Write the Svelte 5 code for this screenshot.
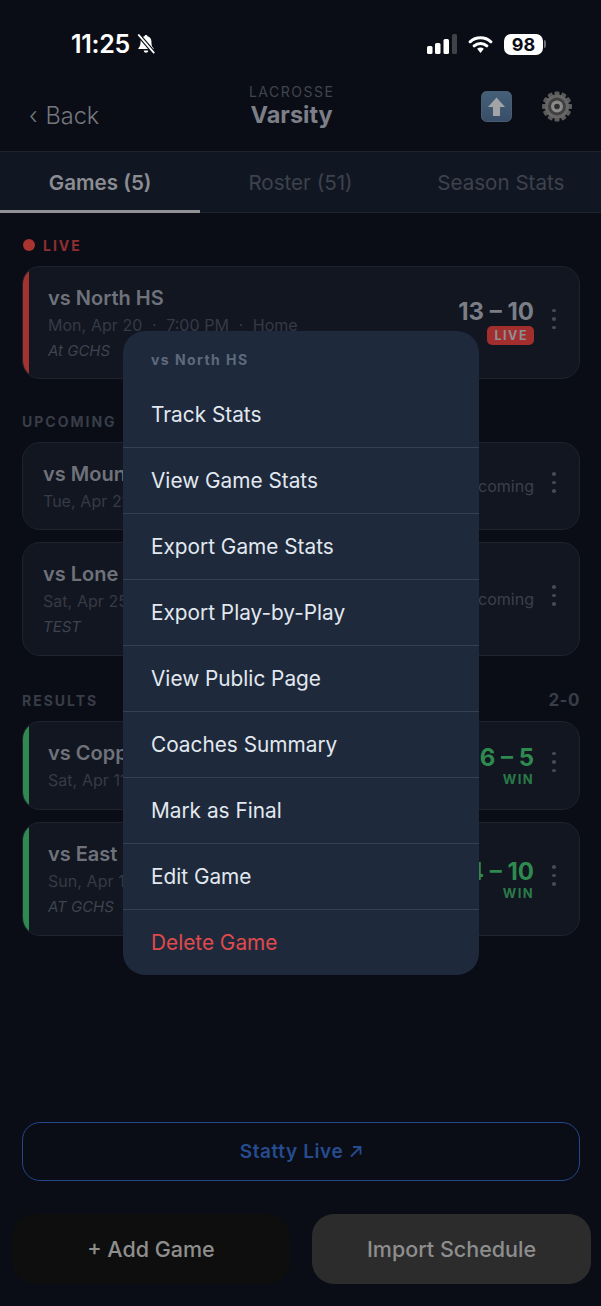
<script>
  const upcoming = [
    { name: 'vs Mountain View', sub: 'Tue, Apr 21  ·  6:30 PM  ·  Away', note: '' },
    { name: 'vs Lone Peak', sub: 'Sat, Apr 25  ·  1:00 PM  ·  Home', note: 'TEST' }
  ];
  const results = [
    { name: 'vs Copper Hills', sub: 'Sat, Apr 11  ·  4:00 PM  ·  Away', note: '', score: '6 – 5' },
    { name: 'vs East High', sub: 'Sun, Apr 12  ·  5:00 PM  ·  Home', note: 'AT GCHS', score: '14 – 10' }
  ];
  const menuItems = [
    'Track Stats',
    'View Game Stats',
    'Export Game Stats',
    'Export Play-by-Play',
    'View Public Page',
    'Coaches Summary',
    'Mark as Final',
    'Edit Game'
  ];
  const teeth = [0, 30, 60, 90, 120, 150];
</script>

<style>
  :global(body) {
    margin: 0;
    background: #0a0d16;
  }

  .screen {
    position: relative;
    width: 601px;
    height: 1306px;
    overflow: hidden;
    display: flex;
    flex-direction: column;
    background: #0a0d16;
    font-family: Inter, "Liberation Sans", sans-serif;
  }

  /* status bar */
  .status {
    height: 76px;
    flex: none;
    display: flex;
    align-items: flex-start;
    justify-content: space-between;
    padding: 30px 55px 0 71px;
    box-sizing: border-box;
    color: #fff;
  }
  .status-left {
    display: flex;
    align-items: center;
    gap: 6px;
    height: 28px;
    font-size: 25px;
    font-weight: 600;
    letter-spacing: -0.3px;
  }
  .status-right {
    display: flex;
    align-items: center;
    gap: 11px;
    height: 28px;
  }
  .battery {
    display: flex;
    align-items: center;
    gap: 1px;
  }
  .battery-body {
    width: 39px;
    height: 21px;
    border-radius: 7px;
    background: #fff;
    color: #0a0d16;
    font-size: 18px;
    font-weight: 700;
    display: flex;
    align-items: center;
    justify-content: center;
  }
  .battery-tip {
    width: 2px;
    height: 8px;
    border-radius: 0 2px 2px 0;
    background: #6b6e74;
  }

  /* header */
  .header {
    height: 76px;
    flex: none;
    display: flex;
    justify-content: space-between;
    align-items: center;
    padding: 0 29px;
    box-sizing: border-box;
    border-bottom: 1px solid #1d222d;
  }
  .back {
    font-size: 23.5px;
    font-weight: 300;
    color: #74777e;
    padding-top: 3px;
    display: flex;
    align-items: center;
    gap: 8px;
  }
  .title {
    text-align: center;
    margin-top: -15px;
    margin-left: 3px;
  }
  .sport {
    font-size: 14px;
    letter-spacing: 1.5px;
    color: #41454f;
    line-height: 17px;
  }
  .team {
    font-size: 23.5px;
    font-weight: 700;
    color: #7c7f87;
    line-height: 30px;
  }
  .actions {
    display: flex;
    justify-content: flex-end;
    gap: 30px;
    margin-top: -14px;
  }

  /* tabs */
  .tabs {
    height: 61px;
    flex: none;
    display: grid;
    grid-template-columns: 1fr 1fr 1fr;
    background: #111722;
    border-bottom: 1px solid #1d222d;
    box-sizing: border-box;
  }
  .tab {
    display: flex;
    align-items: center;
    justify-content: center;
    padding-top: 2px;
    font-size: 20.6px;
    color: #3d424d;
    box-sizing: border-box;
    border-bottom: 3px solid transparent;
    margin-bottom: -1px;
  }
  .tab.active {
    color: #8b8d92;
    font-weight: 600;
    border-bottom-color: #8f9195;
  }

  /* game list */
  .list {
    flex: 1;
    display: flex;
    flex-direction: column;
    padding: 22px 21px 0 22px;
  }
  .section-head {
    display: flex;
    justify-content: space-between;
    align-items: center;
    height: 20px;
    margin-bottom: 11px;
    font-size: 14px;
    font-weight: 700;
    letter-spacing: 2px;
    color: #383d48;
  }
  .section-head.live {
    color: #8f2f30;
    justify-content: flex-start;
    gap: 8px;
    padding-left: 1px;
  }
  .dot {
    width: 12px;
    height: 12px;
    border-radius: 50%;
    background: #a8332f;
  }
  .record {
    font-size: 17px;
    letter-spacing: 0.5px;
  }
  .stack {
    display: flex;
    flex-direction: column;
    gap: 12px;
    margin-bottom: 32px;
  }
  .stack.wide-gap {
    margin-bottom: 34px;
  }
  .card {
    display: flex;
    align-items: center;
    box-sizing: border-box;
    padding: 0 17px 0 20px;
    background: #111621;
    border: 1px solid #1e232e;
    border-radius: 18px;
    overflow: hidden;
  }
  .card.h-sm { height: 88px; }
  .card.h-lg { height: 114px; }
  .card.h-live { height: 113px; }
  .card.h-res { height: 89px; }
  .card.accented { padding-left: 0; }
  .accent {
    align-self: stretch;
    flex: none;
    width: 6px;
    margin-right: 19px;
  }
  .accent.red { background: #a33230; }
  .accent.green { background: #2f8a4f; }
  .info {
    flex: 1;
    min-width: 0;
    padding-top: 2px;
  }
  .name {
    font-size: 20px;
    font-weight: 600;
    color: #6f727a;
    line-height: 26px;
    white-space: nowrap;
  }
  .sub {
    font-size: 16px;
    word-spacing: 0.3px;
    color: #363a45;
    line-height: 25px;
    margin-top: 2px;
    white-space: pre;
  }
  .note {
    font-size: 15px;
    font-style: italic;
    color: #3f434d;
    line-height: 25px;
  }
  .side {
    display: flex;
    flex-direction: column;
    align-items: flex-end;
    margin-right: 18px;
  }
  .side.raised {
    margin-top: -3px;
  }
  .score {
    font-size: 24px;
    font-weight: 700;
    line-height: 28px;
    color: #7b7e85;
  }
  .score.green { color: #2f8a4f; }
  .badge {
    background: #a32e2e;
    color: #8d8f94;
    font-size: 12.5px;
    font-weight: 700;
    letter-spacing: 1.5px;
    border-radius: 5px;
    padding: 2px 6px 2px 7px;
    line-height: 15px;
  }
  .result {
    font-size: 13px;
    font-weight: 700;
    letter-spacing: 1.4px;
    color: #2a7a48;
    line-height: 15px;
  }
  .state {
    font-size: 16px;
    color: #3c404a;
  }
  .more {
    display: flex;
    flex-direction: column;
    gap: 5px;
    width: 4px;
    margin: 0 6px 7px 0;
  }
  .more span {
    width: 3.5px;
    height: 3.5px;
    border-radius: 50%;
    background: #454953;
  }

  /* footer */
  .live-link {
    flex: none;
    height: 59px;
    margin: 0 21px 33px 22px;
    display: flex;
    align-items: center;
    justify-content: center;
    gap: 6px;
    box-sizing: border-box;
    border: 1.5px solid #22488a;
    border-radius: 18px;
    color: #264c90;
    font-size: 19px;
    font-weight: 600;
    letter-spacing: 0.6px;
  }
  .bottom {
    flex: none;
    display: grid;
    grid-template-columns: 278px 279px;
    gap: 22px;
    padding: 0 10px 22px 12px;
  }
  .bottom div {
    height: 70px;
    border-radius: 22px;
    display: flex;
    align-items: center;
    justify-content: center;
    font-size: 21.5px;
    font-weight: 500;
    color: #8e8e8e;
  }
  .add { background: #0e0e0f; }
  .import { background: #2c2c2d; }

  /* context menu, sits above the dimmed page */
  .menu {
    position: absolute;
    left: 123px;
    top: 331px;
    width: 356px;
    height: 644px;
    background: #1e293b;
    border-radius: 22px;
    overflow: hidden;
  }
  .menu-title {
    height: 51px;
    padding: 20px 28px 0;
    box-sizing: border-box;
    font-size: 14px;
    font-weight: 700;
    letter-spacing: 1.45px;
    line-height: 18px;
    color: #5e6a7e;
  }
  .menu-item {
    height: 66px;
    padding: 0 28px;
    display: flex;
    align-items: center;
    box-sizing: border-box;
    border-bottom: 1px solid #334155;
    font-size: 20.8px;
    color: #e2e8f0;
  }
  .menu-item.danger {
    height: 65px;
    border-bottom: none;
    color: #e04a4c;
  }
</style>

<div class="screen">
  <div class="status">
    <div class="status-left">
      <span>11:25</span>
      <svg width="20" height="21" viewBox="0 0 22 23">
        <path d="M11 1c-1 0-1.600.7-1.700 1.500C6.500 3.300 5 5.600 5 8.500c0 3.500-.8 5.500-2.200 6.800-.5.500-.2 1.200.5 1.200h15.400c.7 0 1-.7.500-1.200C17.300 14 17 12 17 8.500c0-2.900-1.500-5.200-4.300-6C12.600 1.700 12 1 11 1z" fill="#fff"/>
        <path d="M8.500 18h5c-.2 1.500-1.200 2.500-2.500 2.500S8.700 19.500 8.500 18z" fill="#fff"/>
        <path d="M2.500 0.500 20 21" stroke="#0a0d16" stroke-width="4.500"/>
        <path d="M2.500 0.500 20 21" stroke="#fff" stroke-width="2"/>
      </svg>
    </div>
    <div class="status-right">
      <svg width="30" height="20" viewBox="0 0 30 20">
        <rect x="0" y="12" width="5.500" height="8" rx="1.500" fill="#fff"/>
        <rect x="8" y="9" width="5.500" height="11" rx="1.500" fill="#fff"/>
        <rect x="16.500" y="5" width="5.500" height="15" rx="1.500" fill="#fff"/>
        <rect x="25" y="0" width="5" height="20" rx="1.500" fill="#3f4248"/>
      </svg>
      <svg width="25" height="19" viewBox="0 0 27 21">
        <path d="M2 7.500C8.500 1.500 18.500 1.500 25 7.500M6.500 12c4-3.600 10-3.600 14 0" fill="none" stroke="#fff" stroke-width="3.300" stroke-linecap="round"/>
        <path d="M9.800 15.300c2.200-1.800 5.200-1.800 7.400 0l-3.700 4.500z" fill="#fff"/>
      </svg>
      <div class="battery">
        <div class="battery-body">98</div>
        <div class="battery-tip"></div>
      </div>
    </div>
  </div>

  <div class="header">
    <div class="back"><span>‹</span><span>Back</span></div>
    <div class="title">
      <div class="sport">LACROSSE</div>
      <div class="team">Varsity</div>
    </div>
    <div class="actions">
      <svg width="31" height="31" viewBox="0 0 31 31">
        <defs>
          <linearGradient id="tile" x1="0" y1="0" x2="0" y2="1">
            <stop offset="0" stop-color="#46607a"/>
            <stop offset="1" stop-color="#384e68"/>
          </linearGradient>
        </defs>
        <rect x="0.500" y="0.500" width="30" height="30" rx="5" fill="url(#tile)" stroke="#4a5c70"/>
        <path d="M15.500 6.500 24 16h-5v9h-7v-9H7z" fill="#a2a4a6"/>
      </svg>
      <svg width="30" height="31" viewBox="0 0 30 31">
        <g fill="#5a5a5a">
          {#each teeth as t}
            <rect x="12.500" y="0.500" width="5" height="30" rx="1" transform="rotate({t} 15 15.500)"/>
          {/each}
        </g>
        <circle cx="15" cy="15.500" r="12" fill="#666"/>
        <circle cx="15" cy="15.500" r="9" fill="#404040"/>
        <circle cx="15" cy="15.500" r="6" fill="#8a8a8a"/>
        <circle cx="15" cy="15.500" r="2.800" fill="#2e2e2e"/>
      </svg>
    </div>
  </div>

  <div class="tabs">
    <div class="tab active">Games (5)</div>
    <div class="tab">Roster (51)</div>
    <div class="tab">Season Stats</div>
  </div>

  <div class="list">
    <div class="section-head live"><span class="dot"></span>LIVE</div>
    <div class="stack">
      <div class="card accented h-live">
        <span class="accent red"></span>
        <div class="info">
          <div class="name">vs North HS</div>
          <div class="sub">Mon, Apr 20  ·  7:00 PM  ·  Home</div>
          <div class="note">At GCHS</div>
        </div>
        <div class="side raised">
          <div class="score">13 – 10</div>
          <div class="badge">LIVE</div>
        </div>
        <div class="more"><span></span><span></span><span></span></div>
      </div>
    </div>

    <div class="section-head">UPCOMING</div>
    <div class="stack wide-gap">
      {#each upcoming as game}
        <div class="card {game.note ? 'h-lg' : 'h-sm'}">
          <div class="info">
            <div class="name">{game.name}</div>
            <div class="sub">{game.sub}</div>
            {#if game.note}<div class="note">{game.note}</div>{/if}
          </div>
          <div class="side"><div class="state">Upcoming</div></div>
          <div class="more"><span></span><span></span><span></span></div>
        </div>
      {/each}
    </div>

    <div class="section-head"><span>RESULTS</span><span class="record">2-0</span></div>
    <div class="stack">
      {#each results as game}
        <div class="card accented {game.note ? 'h-lg' : 'h-res'}">
          <span class="accent green"></span>
          <div class="info">
            <div class="name">{game.name}</div>
            <div class="sub">{game.sub}</div>
            {#if game.note}<div class="note">{game.note}</div>{/if}
          </div>
          <div class="side">
            <div class="score green">{game.score}</div>
            <div class="result">WIN</div>
          </div>
          <div class="more"><span></span><span></span><span></span></div>
        </div>
      {/each}
    </div>
  </div>

  <div class="live-link">
    <span>Statty Live</span>
    <svg width="13" height="13" viewBox="0 0 13 13">
      <path d="M2 11.500 11 2.500M4 2h7.500v7.500" fill="none" stroke="#264c90" stroke-width="1.800"/>
    </svg>
  </div>
  <div class="bottom">
    <div class="add">+ Add Game</div>
    <div class="import">Import Schedule</div>
  </div>

  <div class="menu">
    <div class="menu-title">vs North HS</div>
    {#each menuItems as item}
      <div class="menu-item">{item}</div>
    {/each}
    <div class="menu-item danger">Delete Game</div>
  </div>
</div>
